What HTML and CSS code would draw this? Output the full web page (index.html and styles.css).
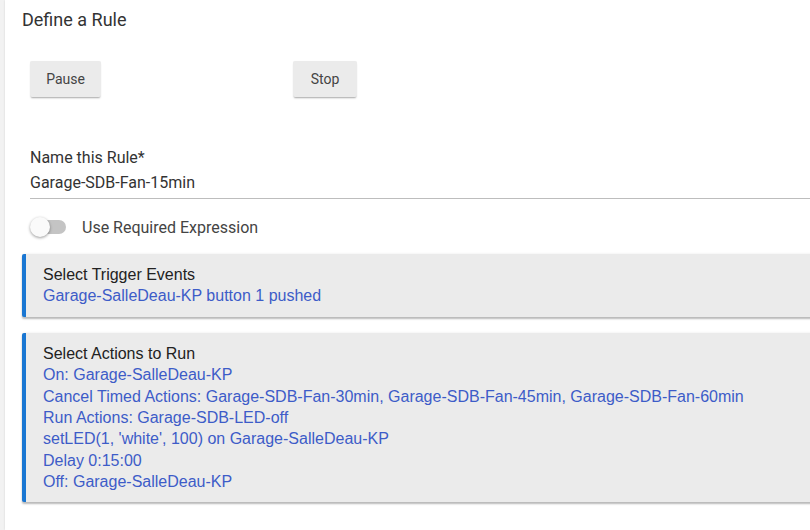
FILE: index.html
```html
<!DOCTYPE html>
<html>
<head>
<meta charset="utf-8">
<link rel="stylesheet" href="styles.css">
</head>
<body>
<div class="page">
  <h1 class="title">Define a Rule</h1>
  <div class="buttons">
    <button class="btn btn-pause">Pause</button>
    <button class="btn btn-stop">Stop</button>
  </div>
  <div class="field">
    <label class="field-label">Name this Rule*</label>
    <div class="field-value">Garage-SDB-Fan-15min</div>
  </div>
  <div class="toggle-row">
    <span class="toggle"><span class="track"></span><span class="knob"></span></span>
    <span class="toggle-label">Use Required Expression</span>
  </div>
  <div class="card card-trigger">
    <div class="card-title">Select Trigger Events</div>
    <div class="card-line">Garage-SalleDeau-KP button 1 pushed</div>
  </div>
  <div class="card">
    <div class="card-title">Select Actions to Run</div>
    <div class="card-line">On: Garage-SalleDeau-KP</div>
    <div class="card-line">Cancel Timed Actions: Garage-SDB-Fan-30min, Garage-SDB-Fan-45min, Garage-SDB-Fan-60min</div>
    <div class="card-line">Run Actions: Garage-SDB-LED-off</div>
    <div class="card-line">setLED(1, 'white', 100) on Garage-SalleDeau-KP</div>
    <div class="card-line">Delay 0:15:00</div>
    <div class="card-line">Off: Garage-SalleDeau-KP</div>
  </div>
</div>
</body>
</html>
```

FILE: styles.css
```css
html, body {
  margin: 0;
  padding: 0;
  background: #f2f2f2;
  overflow: hidden;
  height: 530px;
}
.page {
  margin-left: 5px;
  width: 1000px;
  height: 530px;
  background: #fff;
  box-shadow: 0 0 2px rgba(0,0,0,0.12);
  padding: 9px 0 0 17px;
  box-sizing: border-box;
  font-family: Roboto, "Liberation Sans", sans-serif;
  color: #333;
}
.title {
  margin: 0;
  font-size: 18px;
  font-weight: 400;
  line-height: 22px;
  color: #333;
}
.buttons {
  display: grid;
  grid-template-columns: 263px auto;
  justify-items: start;
  margin: 30px 0 0 8px;
}
.btn {
  font-family: Roboto, "Liberation Sans", sans-serif;
  font-size: 14px;
  color: #444;
  background: #ebebeb;
  border: none;
  border-radius: 2px;
  height: 36px;
  padding: 0;
  box-shadow: 0 2px 2px -1px rgba(0,0,0,0.35), 0 0 1px rgba(0,0,0,0.06);
}
.btn-pause { width: 71px; }
.btn-stop { width: 64px; }
.field {
  margin: 49px 0 0 8px;
  border-bottom: 1px solid #bdbdbd;
  padding-bottom: 3px;
}
.field-label {
  display: block;
  font-size: 16px;
  line-height: 24px;
  color: #333;
}
.field-value {
  font-size: 16px;
  line-height: 25px;
  color: #333;
}
.toggle-row {
  display: flex;
  align-items: center;
  margin: 18px 0 0 8px;
  height: 20px;
}
.toggle {
  position: relative;
  width: 36px;
  height: 20px;
  display: inline-block;
}
.track {
  position: absolute;
  left: 2px;
  top: 3px;
  width: 34px;
  height: 14px;
  border-radius: 7px;
  background: #c4c4c4;
}
.knob {
  position: absolute;
  left: 0;
  top: 0;
  width: 20px;
  height: 20px;
  border-radius: 50%;
  background: #fafafa;
  box-shadow: 0 1px 3px rgba(0,0,0,0.4);
}
.toggle-label {
  margin-left: 16px;
  font-size: 16px;
  color: #444;
}
.card {
  margin-top: 16px;
  background: #ebebeb;
  border-left: 4px solid #1976d2;
  padding: 10px 0 9px 17px;
  box-shadow: 0 2px 2px rgba(0,0,0,0.28), 0 -1px 2px rgba(0,0,0,0.04);
  border-radius: 2px 0 0 2px;
  font-family: "Liberation Sans", Arial, sans-serif;
  font-size: 16px;
  line-height: 21.4px;
}
.card-trigger { margin-top: 17px; padding-bottom: 10px; }
.card-title { color: #222; }
.card-line { color: #3d5cc8; }
```
